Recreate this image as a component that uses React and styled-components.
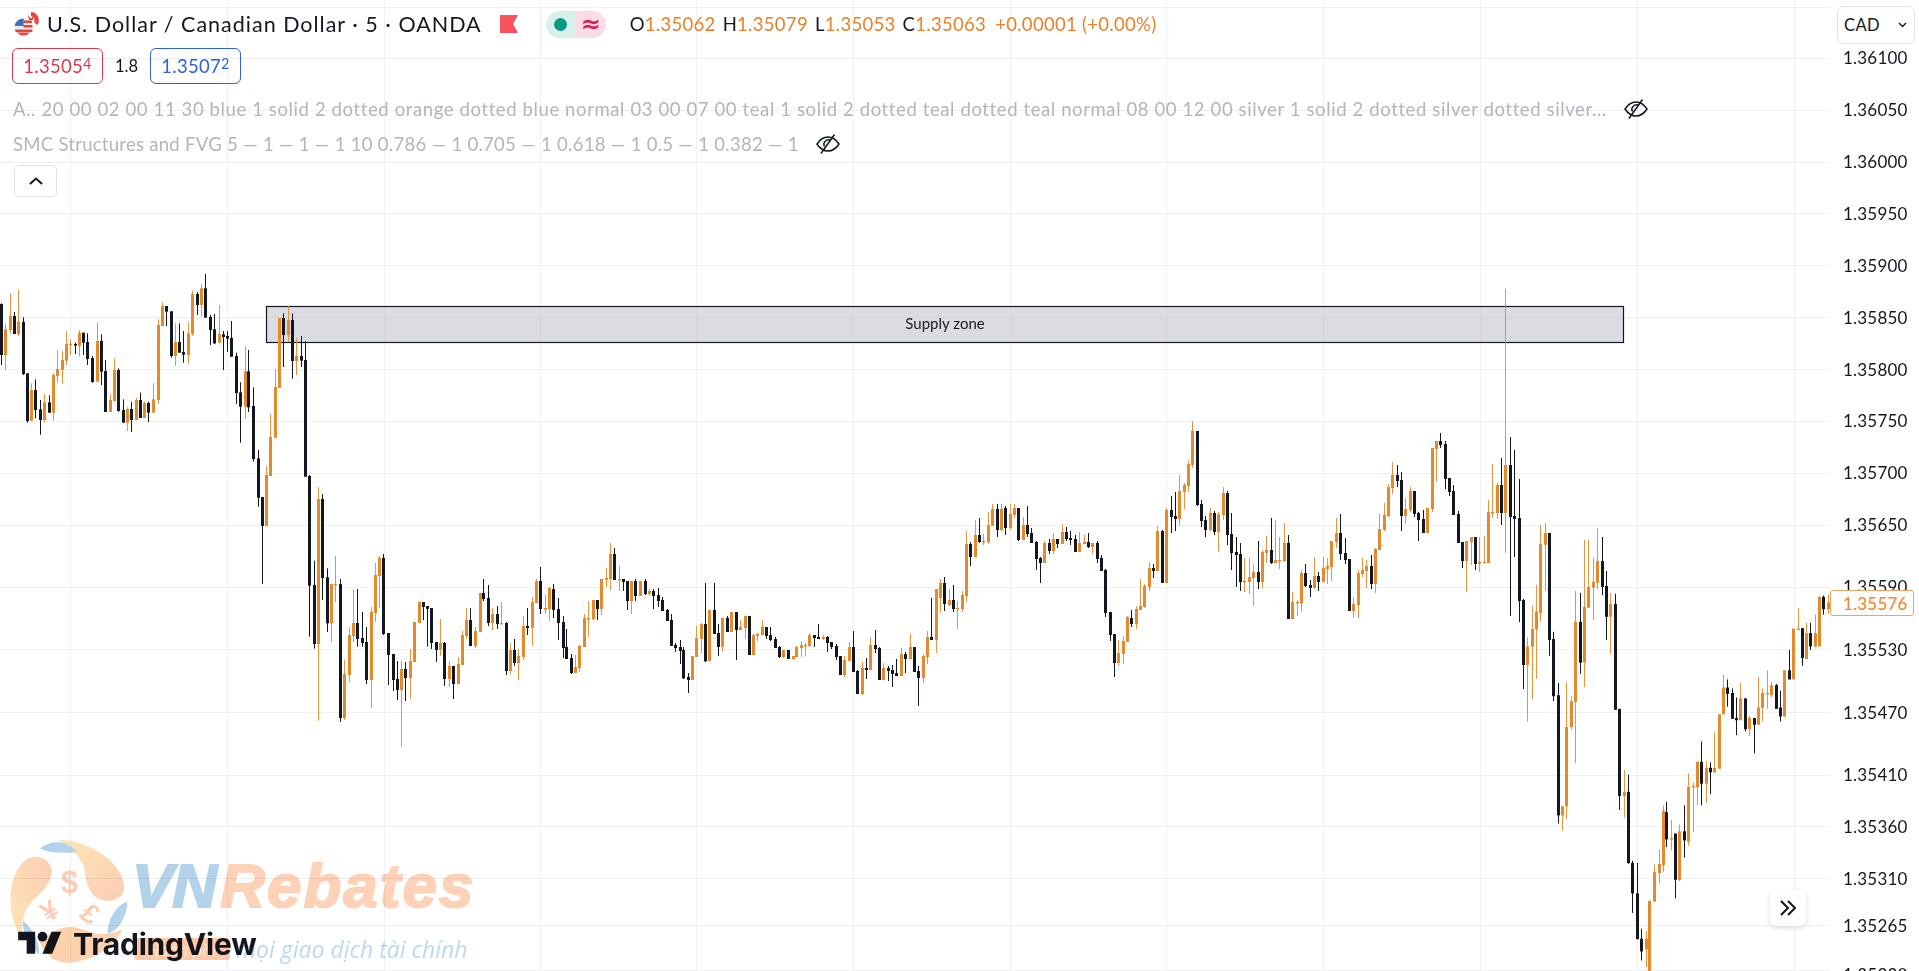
import React from 'react';
import styled, { createGlobalStyle } from 'styled-components';

const GlobalStyle = createGlobalStyle`
  html, body { margin: 0; padding: 0; background: #fff; }
  body { font-family: "Lato", "Open Sans", sans-serif; overflow: hidden; }
`;

const UP = '#e58a2c';
const DOWN = '#131722';
const FONT = '"Lato", "Open Sans", sans-serif';

// candles read off the reference: kind x bodyTop bodyBottom high low, in the units of each crop
const SEGMENTS = [
  { ox: 0, oy: 270, sx: 1 / 3, sy: 1 / 3, data: `
d 2 102 255 100 285;u 16 178 255 160 300;u 29 138 180 70 190;d 41 138 192 126 192;u 55 155 192 60 198;d 68 156 312 142 315
d 80 310 453 310 458;u 94 360 452 340 452;d 106 360 420 328 445;d 121 418 450 390 494;u 133 397 450 372 458;d 146 397 428 376 428
u 160 315 428 310 452;u 172 297 318 240 338;u 185 270 300 243 342;u 199 222 272 183 285;u 211 221 225 208 255;d 224 222 226 218 252
u 238 188 228 180 260;d 250 188 218 188 255;d 262 216 267 190 285;d 277 264 336 258 338;u 290 213 335 158 335;d 302 213 305 193 345
d 316 303 426 270 426;u 329 390 426 372 426;u 341 300 393 265 395;d 355 300 423 295 425;d 368 420 458 388 458;u 382 417 458 412 483
d 394 417 450 396 486;u 407 390 450 384 450;d 421 390 444 368 444;u 433 399 444 395 444;d 445 399 428 395 456;u 460 388 428 340 428
u 473 165 390 148 402;u 485 108 168 97 168;d 499 108 125 108 168;d 512 124 258 124 263;u 524 216 258 160 288;d 538 216 248 160 248
d 550 246 254 183 278;u 563 190 255 157 282;u 577 72 192 62 198;d 590 72 105 66 135;u 602 55 105 42 140;d 616 55 143 12 143
d 629 141 180 135 225;d 643 178 220 132 222;u 656 192 218 105 220;d 668 193 201 183 300;d 682 198 206 183 246;d 694 204 260 153 260
d 707 258 369 248 402;d 721 367 410 337 518;u 734 304 410 228 446;d 745 304 412 240 426;d 760 408 567 352 575;d 773 565 683 540 710
d 785 681 768 681 942;u 799 615 768 588 768;u 811 501 618 432 618;u 824 351 503 297 503;u 838 144 354 144 354;d 850 144 195 130 291
u 863 150 195 108 215;d 877 150 273 130 326;u 889 258 273 205 315;d 904 258 272 198 291;d 916 270 620 214 620` },
  { ox: 260, oy: 470, sx: 1 / 3, sy: 1 / 3, data: `
d 148 18 347 15 500;d 161 345 522 272 536;u 175 87 522 52 752;d 187 87 324 72 390;d 201 322 460 295 486;u 214 342 460 342 516
u 226 342 345 258 396;d 240 342 744 327 756;u 253 612 744 570 750;u 266 495 615 472 636;u 279 459 498 360 516;d 292 459 507 357 530
d 305 504 519 426 530;d 319 516 630 471 642;u 332 426 630 411 714;u 344 315 429 279 456;u 358 263 318 258 414;d 370 264 492 252 495
d 385 489 555 489 645;d 398 552 630 552 663;d 410 627 660 573 690;u 424 597 660 573 831;d 436 597 624 576 693;u 449 573 624 537 687
u 463 456 576 456 576;u 476 396 459 396 459;d 488 396 411 396 450;d 502 408 417 408 530;d 514 414 519 414 537;d 527 516 540 516 576
u 541 519 540 447 558;d 553 519 627 516 648;u 566 588 627 573 651;d 580 588 642 588 687;u 593 582 642 561 642;u 605 495 585 483 585
u 619 450 498 414 507;d 631 450 528 414 528;u 646 483 528 471 534;u 659 369 486 369 486;d 670 369 387 327 393;d 685 384 459 345 468
u 697 432 459 414 480;d 710 432 462 408 477;u 724 459 462 396 462;d 737 459 603 456 615;u 749 540 603 519 612;d 763 540 579 507 588
u 775 558 579 537 630;u 788 468 561 438 570;d 802 468 474 414 495;u 815 396 474 381 528;u 827 333 399 327 400;d 841 333 417 291 432
u 854 414 417 375 432;u 866 354 417 351 453;d 880 357 420 342 444;d 893 417 459 384 510;d 908 456 534 438 564;d 919 531 567 477 567
d 932 564 609 552 612;u 946 591 609 555 609;u 958 528 594 525 606;u 971 444 531 432 531;u 985 444 447 393 501;u 998 390 447 390 450
d 1010 390 417 390 450;u 1024 327 417 327 435;u 1037 324 330 294 351;u 1049 252 327 219 360;d 1063 252 330 234 330;u 1076 327 330 288 363
d 1088 327 336 327 363;d 1102 333 393 333 420` },
  { ox: 630, oy: 500, sx: 1 / 3, sy: 1 / 3, data: `
u 3 243 303 243 342;d 16 243 288 237 303;u 31 243 288 243 288;d 44 243 282 237 285;u 58 273 282 267 288;d 70 273 288 267 327
d 83 285 303 264 321;d 97 300 333 291 333;d 110 330 363 327 363;d 122 360 438 342 438;d 136 435 444 429 456;d 149 441 453 420 492
d 160 450 535 441 537;d 175 531 540 519 579;u 187 468 540 468 540;u 199 414 471 378 471;u 214 372 417 369 459;d 226 372 484 249 486
u 238 330 483 330 483;d 253 330 402 249 402;d 265 399 441 372 468;u 277 354 441 354 456;d 292 354 396 348 396;u 304 336 396 336 396
d 319 336 390 336 480;u 331 381 390 360 390;u 344 348 384 348 417;d 358 348 465 348 465;u 370 405 465 399 465;u 382 402 408 399 423
u 397 381 405 360 405;d 409 381 408 381 417;d 421 405 420 381 423;d 436 417 444 411 444;d 448 441 471 438 474;u 460 450 471 450 474
d 475 450 477 450 477;u 488 468 477 468 480;u 499 441 471 438 471;u 514 435 444 423 471;u 526 435 438 429 468;u 538 405 438 399 441
d 553 405 414 405 441;d 565 411 417 372 417;u 580 411 417 405 420;d 592 411 429 408 456;d 604 426 441 426 447;d 619 438 471 432 480
d 631 468 525 468 525;u 643 480 525 468 531;u 658 441 483 426 483;d 670 441 516 393 516;d 682 513 582 510 582;u 697 504 582 486 585
d 709 504 510 474 537;u 721 435 510 411 510;d 736 435 447 390 459;d 748 444 540 441 540;u 760 504 540 489 540;d 775 504 513 498 543
d 787 510 522 495 561;d 799 519 528 477 528;u 814 462 528 444 528;d 826 462 477 456 519;u 841 441 477 402 477;d 853 441 516 441 516
d 865 513 534 498 618;u 880 468 534 462 549;u 892 411 471 393 492;d 904 411 420 294 420;u 919 267 420 267 459;u 931 249 294 237 339
d 943 249 312 231 333;u 958 300 315 267 318;d 970 300 327 255 336;u 982 324 327 303 387;u 997 285 327 273 336;u 1009 132 288 93 306
d 1021 132 171 126 198;u 1036 105 171 60 171;d 1048 105 126 54 129;u 1060 123 126 102 135;u 1075 75 126 36 132;u 1087 27 78 12 78
d 1102 27 90 12 111` },
  { ox: 960, oy: 410, sx: 1 / 3, sy: 1 / 3, data: `
u 124 297 360 282 363;d 136 294 354 288 375;u 151 312 354 282 360;u 163 294 315 282 324;d 175 294 390 294 393;u 190 345 390 321 390
d 202 345 372 288 381;d 214 369 399 354 399;d 229 396 447 393 480;d 241 444 459 441 519;u 253 399 459 393 459;d 268 399 423 387 432
u 280 387 423 369 432;d 292 387 402 387 414;u 307 366 402 342 402;d 319 366 387 351 393;d 331 384 390 363 405;d 346 387 426 375 426
u 358 399 426 366 426;u 373 396 402 375 402;d 385 396 411 369 414;u 397 399 411 399 432;d 412 399 447 393 459;d 424 444 483 435 483
d 436 480 609 477 621;d 451 606 675 606 693;d 463 672 759 672 801;u 475 729 759 690 768;u 490 693 732 678 762;u 502 621 696 618 696
d 514 624 642 600 651;u 529 597 642 588 657;u 541 588 600 507 600;u 553 528 591 522 594;u 568 474 531 456 543;d 580 474 483 462 504
u 592 363 483 348 483;d 607 363 519 360 519;u 619 300 519 294 519;d 634 300 321 258 369;d 646 318 327 246 363;u 658 243 327 195 348
u 673 225 246 219 297;u 685 162 228 150 246;u 697 63 165 33 174;d 712 63 285 63 288;d 724 282 333 270 351;d 736 330 360 318 381
u 751 309 360 294 363;d 763 309 366 303 375;u 775 312 366 306 426;u 790 249 315 231 330;d 802 249 375 243 405;d 814 372 429 309 480
d 829 426 435 381 531;d 841 432 516 399 543;u 853 513 516 444 546;u 868 501 516 444 552;u 880 486 504 462 588;d 895 486 516 393 537
u 907 426 516 420 534;u 919 420 429 378 459;d 934 420 459 324 462;u 946 450 459 330 459;u 958 450 453 381 477;u 973 399 453 339 456
d 985 399 627 375 627;u 997 576 627 546 627;u 1012 576 579 570 618;u 1024 489 579 480 606;d 1036 489 528 462 531;d 1051 525 534 510 561
u 1063 498 534 441 537;d 1075 498 516 486 543;u 1090 474 516 441 516;u 1102 468 477 444 522` },
  { ox: 1310, oy: 420, sx: 1 / 3, sy: 1 / 3, data: `
u 64 363 441 363 483;u 79 339 366 294 384;d 91 339 402 282 420;d 106 399 420 354 432;d 118 417 573 417 573;u 130 552 573 531 594
u 145 459 555 450 594;u 157 450 462 414 471;u 169 438 453 420 504;d 184 438 492 405 507;u 196 387 492 384 519;u 208 327 390 282 390
u 223 285 330 249 333;u 235 201 288 192 291;u 247 165 204 126 222;d 262 165 183 135 201;d 274 180 288 156 333;u 286 267 288 234 312
u 301 213 270 201 276;d 313 213 282 213 291;d 325 279 300 276 363;d 340 297 339 270 339;u 352 264 339 264 339;u 367 84 267 84 276
u 379 63 87 63 186;d 391 63 75 39 84;d 406 72 177 63 207;d 418 174 216 174 228;d 430 213 285 195 285;d 445 282 369 273 369
d 457 366 423 366 444;u 469 363 423 363 516;u 484 351 366 351 435;d 496 351 432 351 450;u 508 426 432 351 456;u 523 426 429 348 429
u 535 276 429 240 429;u 547 276 279 132 294;u 562 195 279 189 297;d 574 195 279 114 315;u 586 135 279 -393 399;d 601 135 291 51 588
d 613 288 297 90 411;d 628 294 543 177 606;d 640 540 735 537 807` },
  { ox: 1280, oy: 260, sx: 0.4075, sy: 0.4534, data: `
u 607 852 893 832 1018;u 618 814 853 763 968;u 629 775 815 717 924;u 639 626 779 584 798;u 650 602 628 580 730
d 660 602 838 602 873;d 671 836 962 820 973;d 683 960 1225 933 1243;u 693 1205 1225 1205 1258;u 703 1030 1205 931 1233
u 715 973 1030 962 1035;u 725 798 975 730 1110;d 735 798 888 734 913;u 747 765 888 617 942;u 757 721 767 617 767;u 767 710 723 657 794
u 779 664 712 591 726;d 789 664 721 611 739;d 801 719 787 686 838;u 811 759 787 735 869;d 821 759 992 736 992;d 833 990 1182 990 1213
u 843 1173 1182 1125 1230;d 853 1173 1330 1135 1332;d 865 1330 1397 1325 1440;d 875 1397 1498 1330 1498;d 885 1497 1525 1475 1545
u 897 1497 1520 1480 1560;u 906 1414 1568 1412 1568;u 917 1350 1415 1333 1415;u 929 1332 1352 1300 1375;u 939 1215 1335 1203 1350
d 948 1218 1278 1195 1295;u 960 1275 1278 1235 1302;d 970 1265 1367 1265 1408;u 980 1260 1367 1245 1370;d 992 1260 1280 1203 1318
u 1002 1162 1283 1132 1292;u 1013 1160 1163 1152 1262;u 1024 1107 1163 1105 1203;d 1034 1107 1155 1062 1203;u 1045 1120 1155 1105 1198
d 1055 1120 1130 1108 1178;u 1066 1120 1130 1042 1130;u 1078 1002 1122 1002 1122;u 1088 943 1002 915 1002;d 1098 943 957 925 985
d 1109 955 1012 945 1012;d 1120 1010 1015 965 1048;u 1130 967 1015 932 1015;d 1142 967 1035 967 1040;u 1152 1010 1035 1005 1050
d 1162 1010 1025 1010 1088;u 1173 987 1025 920 1025;u 1184 955 988 945 1018;u 1194 955 958 905 990;u 1206 938 960 930 965
d 1216 938 990 935 990;d 1228 987 1007 950 1018;u 1238 905 1007 905 1008;d 1248 905 925 860 925;u 1259 813 925 813 925
u 1270 813 816 768 816;d 1280 812 878 812 895;u 1291 823 880 800 880;d 1301 823 852 800 860;u 1312 823 853 782 853
u 1323 743 852 742 852;d 1333 743 770 740 782;u 1344 755 770 738 780` },
];

const CANDLES = SEGMENTS.flatMap(({ ox, oy, sx, sy, data }) =>
  data.trim().split(/[;\n]+/).map((rec) => {
    const [k, x, t, b, h, l] = rec.trim().split(' ');
    return {
      up: k === 'u',
      x: Math.round(ox + x * sx),
      top: oy + t * sy,
      bottom: oy + b * sy,
      high: oy + h * sy,
      low: oy + l * sy,
    };
  })
);

const GRID_X = [70, 227, 384, 540, 696, 853, 1010, 1166, 1323, 1480, 1637, 1794];
const GRID_Y = [7, 58, 110, 162, 213, 265, 317, 369, 421, 473, 525, 587, 649, 712, 775, 826, 878, 925, 970];

const TICKS = [
  ['1.36100', 58], ['1.36050', 110], ['1.36000', 162], ['1.35950', 213.5], ['1.35900', 265.5],
  ['1.35850', 317.5], ['1.35800', 369.5], ['1.35750', 421], ['1.35700', 473], ['1.35650', 525],
  ['1.35590', 587], ['1.35530', 649.5], ['1.35470', 712.5], ['1.35410', 775], ['1.35360', 827],
  ['1.35310', 879], ['1.35265', 926], ['1.35220', 975],
];

const Page = styled.div`
  display: flex;
  width: 1919px;
  height: 971px;
  overflow: hidden;
  background: #fff;
`;

const ChartPane = styled.div`
  position: relative;
  flex: 0 0 1830px;
  height: 100%;
  overflow: hidden;
`;

const ChartSvg = styled.svg`
  position: absolute;
  inset: 0;
  display: block;
`;

const ZoneLabel = styled.text`
  font: 15px ${FONT};
  fill: #1a1d26;
  text-anchor: middle;
  dominant-baseline: central;
`;

const Legend = styled.div`
  position: absolute;
  top: 0;
  left: 0;
  right: 0;
  padding-left: 12px;
  display: flex;
  flex-direction: column;
  align-items: flex-start;
  font-family: ${FONT};
`;

const TitleRow = styled.div`
  display: flex;
  align-items: center;
  height: 48px;
  margin-bottom: 2px;
`;

const PairFlag = styled.svg`
  margin-left: 2px;
  flex: none;
`;

const Title = styled.span`
  margin-left: 7px;
  font-size: 21.5px;
  letter-spacing: 1px;
  color: #131722;
  white-space: nowrap;
`;

const BookmarkFlag = styled.svg`
  margin-left: 18px;
  flex: none;
`;

const StatusPill = styled.div`
  display: flex;
  margin-left: 28px;
  height: 27px;
  width: 60px;
  border-radius: 14px;
  overflow: hidden;
`;

const StatusCell = styled.div`
  flex: 1;
  display: flex;
  align-items: center;
  justify-content: center;
  background: ${(p) => p.$bg};
  color: #d81e5b;
  font: 700 24px "DejaVu Sans", sans-serif;
`;

const StatusDot = styled.span`
  width: 13px;
  height: 13px;
  border-radius: 50%;
  background: #089981;
`;

const Ohlc = styled.div`
  display: flex;
  margin-left: 24px;
  font-size: 18.5px;
  letter-spacing: 0.3px;
  white-space: nowrap;
`;

const OhlcKey = styled.span`
  color: #131722;
  margin-left: ${(p) => p.$gap || 0}px;
`;

const OhlcValue = styled.span`
  color: #e8822a;
  margin-left: ${(p) => p.$gap || 0}px;
`;

const QuoteRow = styled.div`
  display: flex;
  align-items: center;
  height: 36px;
  margin-top: -2px;
`;

const QuoteBox = styled.div`
  display: flex;
  align-items: center;
  justify-content: center;
  width: 91px;
  height: 36px;
  box-sizing: border-box;
  border: 1px solid ${(p) => p.$color};
  border-radius: 6px;
  color: ${(p) => p.$color};
  font-size: 18.5px;
  letter-spacing: 0.3px;
`;

const QuoteSup = styled.span`
  font-size: 14.5px;
  position: relative;
  top: -3px;
`;

const Spread = styled.span`
  width: 47px;
  text-align: center;
  font-size: 16.5px;
  color: #131722;
`;

const StudyRow = styled.div`
  display: flex;
  align-items: center;
  height: 30px;
  margin-top: ${(p) => p.$top}px;
  padding-left: 1px;
  font-size: 18.5px;
  letter-spacing: ${(p) => p.$spacing}px;
  color: #b2b5be;
  white-space: nowrap;
`;

const EyeOff = styled.svg`
  margin-left: 16px;
  flex: none;
`;

const CollapseButton = styled.button`
  display: flex;
  align-items: center;
  justify-content: center;
  width: 43px;
  height: 32px;
  margin: 6px 0 0 2px;
  padding: 0;
  box-sizing: border-box;
  background: #fff;
  border: 1px solid #e0e3eb;
  border-radius: 5px;
`;

const ScrollButton = styled.button`
  position: absolute;
  left: 1770px;
  top: 890px;
  display: flex;
  align-items: center;
  justify-content: center;
  width: 36px;
  height: 36px;
  padding: 0;
  border: 0;
  border-radius: 6px;
  background: #fff;
  box-shadow: 0 2px 5px rgba(19, 23, 34, 0.16);
`;

const TvLogo = styled.div`
  position: absolute;
  left: 18px;
  top: 925px;
  display: flex;
  align-items: center;
  gap: 11px;
  color: #131722;
`;

const TvWord = styled.span`
  font: 700 30px "Inter", ${FONT};
  letter-spacing: -0.2px;
  line-height: 38px;
`;

const Watermark = styled.div`
  position: absolute;
  left: 0;
  top: 838px;
  display: flex;
  mix-blend-mode: multiply;
  pointer-events: none;
`;

const WatermarkText = styled.div`
  display: flex;
  flex-direction: column;
  margin-left: 3px;
`;

const WordMark = styled.div`
  margin-top: 20px;
  height: 55px;
  font: italic 700 62px/55px "Liberation Sans", sans-serif;
  letter-spacing: 2px;
  -webkit-text-stroke: 2px currentColor;
  white-space: nowrap;
  color: #fdd2b8;
`;

const WordBlue = styled.span`
  color: #b3d3ea;
  letter-spacing: -1px;
  margin-right: 4px;
`;

const Tagline = styled.div`
  display: flex;
  align-items: center;
  margin-top: 20px;
  font: italic 400 23px "Open Sans", sans-serif;
  color: #bcd8ee;
  white-space: nowrap;
`;

const TagHighlight = styled.span`
  display: flex;
  align-items: center;
  justify-content: center;
  width: 96px;
  height: 22px;
  margin: 0 6px 0 2px;
  border-radius: 3px;
  background: #fdc9a8;
  color: #fde9dc;
  font-size: 17px;
`;

const PriceAxis = styled.div`
  position: relative;
  flex: 1;
  height: 100%;
  overflow: hidden;
  font-family: ${FONT};
`;

const CurrencyButton = styled.div`
  display: flex;
  align-items: center;
  justify-content: space-between;
  box-sizing: border-box;
  width: 78px;
  height: 38px;
  margin: 6px 0 6px 7px;
  padding: 0 7px 0 6px;
  border: 1px solid #e0e3eb;
  border-radius: 6px;
  background: #fff;
  font-size: 16.5px;
  letter-spacing: 0.4px;
  color: #131722;
`;

const Tick = styled.div`
  height: ${(p) => p.$h}px;
  padding-left: 13px;
  font-size: 17px;
  line-height: 16px;
  letter-spacing: 0.2px;
  color: #131722;
`;

const PriceTag = styled.div`
  position: absolute;
  left: 0;
  top: 590px;
  display: flex;
  align-items: center;
  box-sizing: border-box;
  width: 84px;
  height: 26px;
  padding-left: 12px;
  background: #fff;
  border: 1px solid #f0a35e;
  border-radius: 3px;
  font-size: 17px;
  letter-spacing: 0.2px;
  font-weight: 500;
  color: #ef8a35;
`;

const Candle = ({ c }) => {
  const fill = c.up ? UP : DOWN;
  return (
    <g fill={fill}>
      <rect x={c.x} y={c.high} width="1" height={Math.max(c.low - c.high, 1)} opacity={c.up ? 0.9 : 1} />
      <rect x={c.x - 1} y={c.top} width="3" height={Math.max(c.bottom - c.top, 1.5)} />
    </g>
  );
};

const Chart = () => (
  <ChartSvg width="1830" height="971" viewBox="0 0 1830 971">
    {GRID_X.map((x) => <rect key={x} x={x} y="0" width="1" height="971" fill="#f0f1f4" />)}
    {GRID_Y.map((y) => <rect key={y} x="0" y={y} width="1830" height="1" fill="#eff0f3" />)}
    <rect x="266.5" y="306.5" width="1357" height="36" fill="rgb(183,185,195)" fillOpacity="0.5" stroke="#131722" strokeWidth="1.2" />
    {CANDLES.map((c, i) => <Candle key={i} c={c} />)}
    <ZoneLabel x="945" y="322.5">Supply zone</ZoneLabel>
  </ChartSvg>
);

const EyeOffIcon = () => (
  <EyeOff width="26" height="22" viewBox="0 0 26 22" fill="none" stroke="#131722" strokeWidth="1.5">
    <path d="M2 11c3-4.6 6.6-7 11-7s8 2.4 11 7c-3 4.6-6.6 7-11 7s-8-2.4-11-7z" />
    <path d="M9.5 13.5a4.4 4.4 0 0 1 6-6" />
    <path d="M19.5 1.5L6 20.5" />
  </EyeOff>
);

const LogoMark = () => (
  <svg width="129" height="127" viewBox="0 115 390 380" style={{ flex: 'none' }}>
    <defs>
      <linearGradient id="warm" x1="0" y1="0" x2="1" y2="1">
        <stop offset="0" stopColor="#fde6b6" />
        <stop offset="1" stopColor="#fccdb4" />
      </linearGradient>
      <linearGradient id="warmLeft" x1="1" y1="0" x2="0" y2="1">
        <stop offset="0" stopColor="#fccdb4" />
        <stop offset="1" stopColor="#fde6b6" />
      </linearGradient>
    </defs>
    <path fill="url(#warm)" d="M175 118C270 118 375 190 375 262C375 290 350 305 320 303C285 300 262 270 258 225C255 180 225 150 175 118Z" />
    <path fill="url(#warmLeft)" d="M105 170C140 170 160 195 155 225C150 265 105 290 85 320C65 350 62 385 72 430C45 390 30 340 32 290C35 230 60 175 105 170Z" />
    <path fill="#fcd2ae" d="M120 430C150 395 195 375 235 385C270 392 300 420 370 390C340 450 270 490 200 490C170 490 140 470 120 430Z" />
    <path fill="#b3d3ea" d="M120 145C150 120 200 115 232 155C190 160 150 160 120 145Z" />
    <path fill="#b3d3ea" d="M385 305C385 345 360 395 325 402C325 365 345 320 385 305Z" />
    <path fill="#b3d3ea" d="M68 362C95 385 120 420 118 465C90 440 70 410 68 362Z" />
    <g fill="#fbcdb2" fontFamily="Liberation Sans, sans-serif" fontWeight="700" textAnchor="middle">
      <text x="210" y="278" fontSize="92">$</text>
      <text x="0" y="0" fontSize="84" transform="translate(165 358) rotate(-32)">¥</text>
      <text x="0" y="0" fontSize="84" transform="translate(255 365) rotate(38)">£</text>
    </g>
  </svg>
);

const Legends = () => (
  <Legend>
    <TitleRow>
      <PairFlag width="26" height="26" viewBox="0 0 26 26">
        <circle cx="17" cy="9" r="8" fill="#fff" />
        <path d="M17 1a8 8 0 0 1 6 13l-3-3a4 4 0 0 0-3-6z" fill="#e8443a" />
        <path d="M14 4l3 3.5L20 4l-1 5h-4z" fill="#e8443a" />
        <circle cx="9.5" cy="16.5" r="9" fill="#e9ecf2" />
        <path d="M.6 15a9 9 0 0 1 9-7.5V15z" fill="#3a6fc4" />
        <path d="M9.5 9.5h8.4v2.4H9.5zM9.5 14h9v2.4h-9zM1 18.5h17.4v2.4H1.6z" fill="#e8443a" />
        <path d="M3 21.5h13a9 9 0 0 1-13 0z" fill="#e8443a" />
      </PairFlag>
      <Title>U.S. Dollar / Canadian Dollar · 5 · OANDA</Title>
      <BookmarkFlag width="18" height="18" viewBox="0 0 18 18">
        <path d="M0 0h18l-5 9 5 9H0z" fill="#f7525f" />
      </BookmarkFlag>
      <StatusPill>
        <StatusCell $bg="#daf0eb"><StatusDot /></StatusCell>
        <StatusCell $bg="#fbdce6">≈</StatusCell>
      </StatusPill>
      <Ohlc>
        <OhlcKey>O</OhlcKey><OhlcValue>1.35062</OhlcValue>
        <OhlcKey $gap={7}>H</OhlcKey><OhlcValue>1.35079</OhlcValue>
        <OhlcKey $gap={7}>L</OhlcKey><OhlcValue>1.35053</OhlcValue>
        <OhlcKey $gap={7}>C</OhlcKey><OhlcValue>1.35063</OhlcValue>
        <OhlcValue $gap={9}>+0.00001 (+0.00%)</OhlcValue>
      </Ohlc>
    </TitleRow>
    <QuoteRow>
      <QuoteBox $color="#d63a50">1.3505<QuoteSup>4</QuoteSup></QuoteBox>
      <Spread>1.8</Spread>
      <QuoteBox $color="#2f62d9">1.3507<QuoteSup>2</QuoteSup></QuoteBox>
    </QuoteRow>
    <StudyRow $top={10} $spacing={0.61}>
      A.. 20 00 02 00 11 30 blue 1 solid 2 dotted orange dotted blue normal 03 00 07 00 teal 1 solid 2 dotted teal dotted teal normal 08 00 12 00 silver 1 solid 2 dotted silver dotted silver...
      <EyeOffIcon />
    </StudyRow>
    <StudyRow $top={5} $spacing={0.27}>
      SMC Structures and FVG 5 — 1 — 1 — 1 10 0.786 — 1 0.705 — 1 0.618 — 1 0.5 — 1 0.382 — 1
      <EyeOffIcon />
    </StudyRow>
    <CollapseButton>
      <svg width="14" height="8" viewBox="0 0 14 8" fill="none" stroke="#131722" strokeWidth="2">
        <path d="M1 7l6-5.5L13 7" />
      </svg>
    </CollapseButton>
  </Legend>
);

const Axis = () => (
  <PriceAxis>
    <CurrencyButton>
      CAD
      <svg width="9" height="6" viewBox="0 0 9 6" fill="none" stroke="#131722" strokeWidth="1.4">
        <path d="M1 1l3.5 3.5L8 1" />
      </svg>
    </CurrencyButton>
    {TICKS.map(([label, y], i) => (
      <Tick key={label} $h={i < TICKS.length - 1 ? TICKS[i + 1][1] - y : 20}>{label}</Tick>
    ))}
    <PriceTag>1.35576</PriceTag>
  </PriceAxis>
);

export default function App() {
  return (
    <Page>
      <GlobalStyle />
      <ChartPane>
        <Chart />
        <TvLogo>
          <svg width="44" height="34" viewBox="0 0 36 28" fill="currentColor">
            <path d="M14 22H7V11H0V4h14v18zM28 22h-8l7.5-18h8L28 22z" />
            <circle cx="20" cy="8" r="4" />
          </svg>
          <TvWord>TradingView</TvWord>
        </TvLogo>
        <Watermark>
          <LogoMark />
          <WatermarkText>
            <WordMark><WordBlue>VN</WordBlue>Rebates</WordMark>
            <Tagline>
              <TagHighlight>Hoàn phí</TagHighlight>
              mọi giao dịch tài chính
            </Tagline>
          </WatermarkText>
        </Watermark>
        <Legends />
        <ScrollButton>
          <svg width="20" height="18" viewBox="0 0 20 18" fill="none" stroke="#131722" strokeWidth="2">
            <path d="M3 2l7 7-7 7M10 2l7 7-7 7" />
          </svg>
        </ScrollButton>
      </ChartPane>
      <Axis />
    </Page>
  );
}
